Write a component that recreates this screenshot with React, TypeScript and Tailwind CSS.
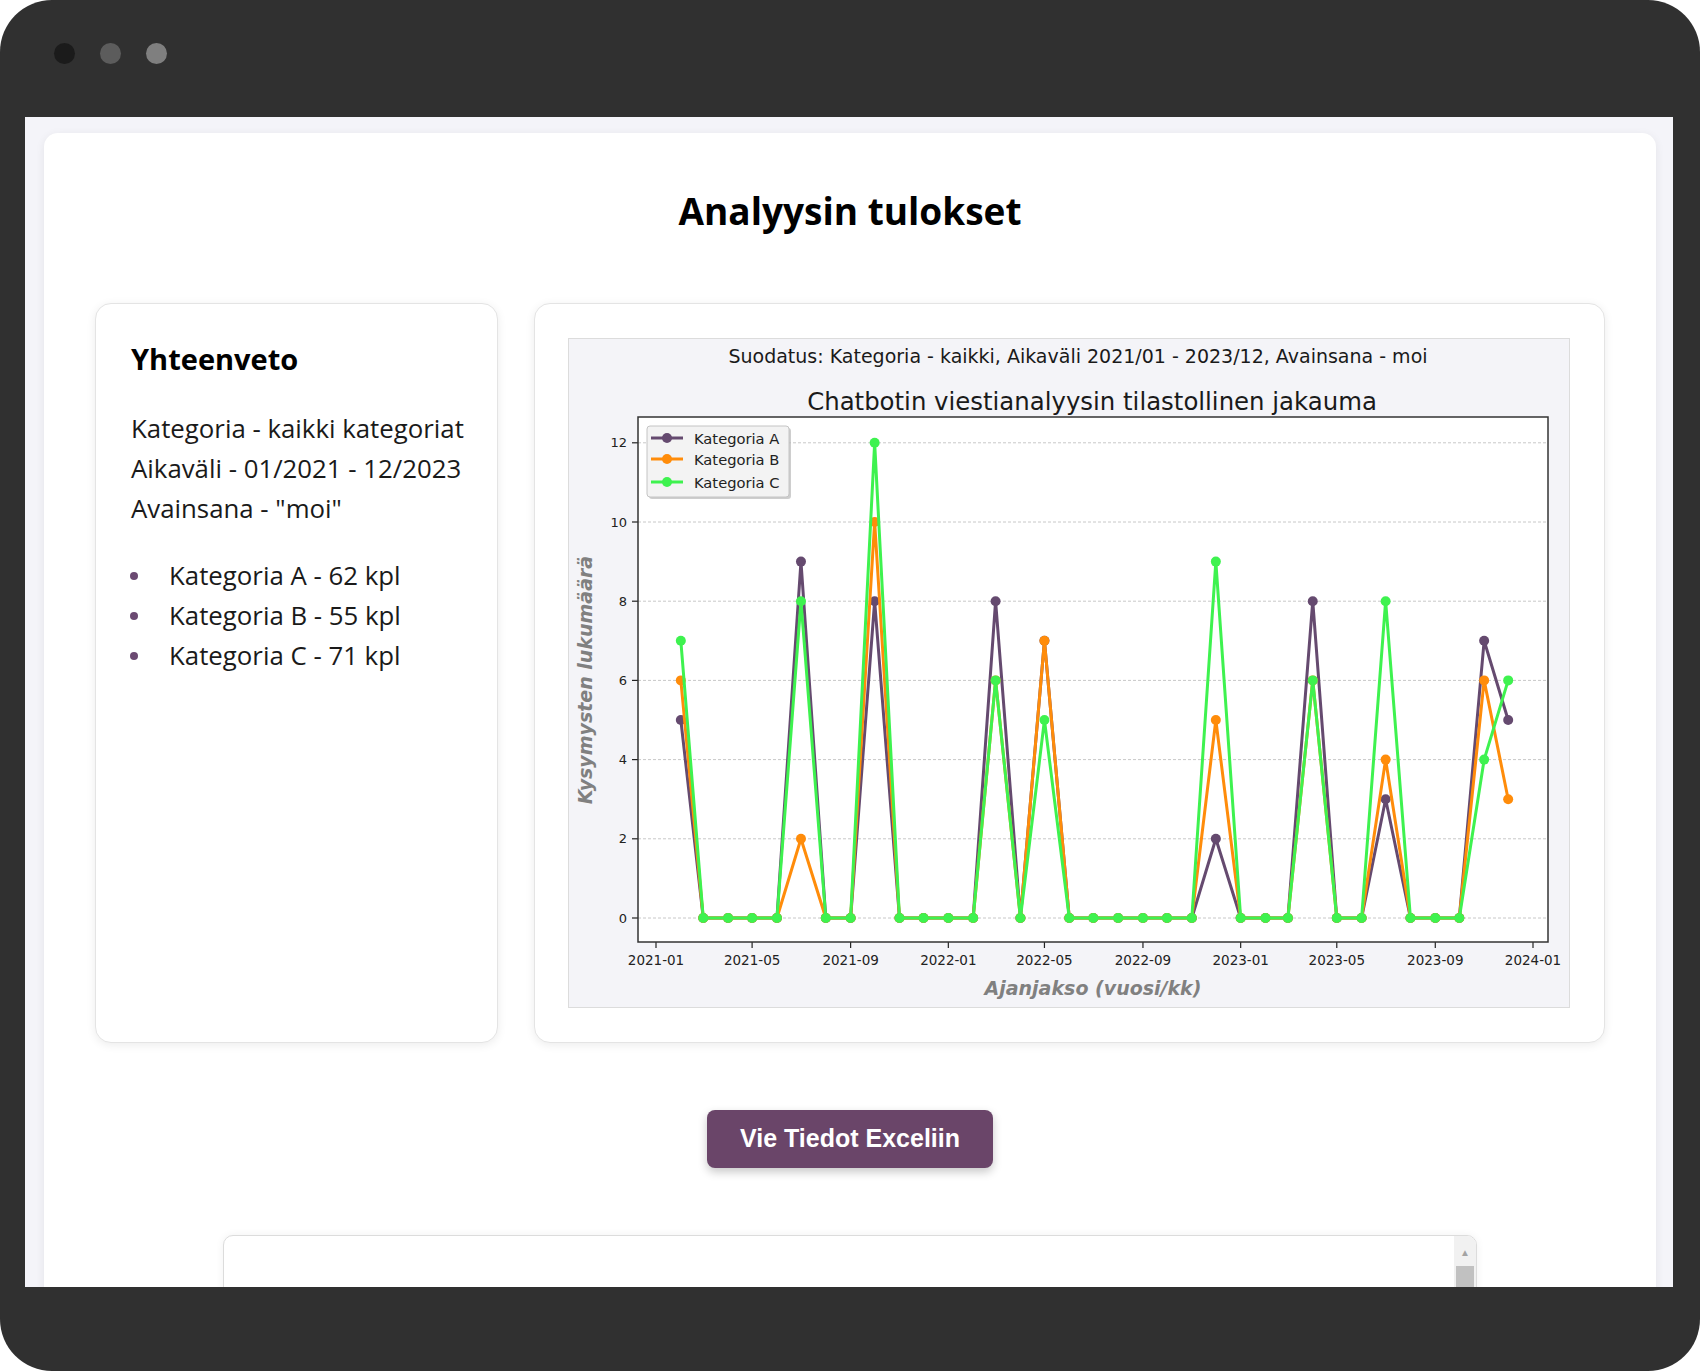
import React from "react";

const A = [5,0,0,0,0,9,0,0,8,0,0,0,0,8,0,7,0,0,0,0,0,0,2,0,0,0,8,0,0,3,0,0,0,7,5];
const B = [6,0,0,0,0,2,0,0,10,0,0,0,0,6,0,7,0,0,0,0,0,0,5,0,0,0,6,0,0,4,0,0,0,6,3];
const C = [7,0,0,0,0,8,0,0,12,0,0,0,0,6,0,5,0,0,0,0,0,0,9,0,0,0,6,0,0,8,0,0,0,4,6];

const DAY0 = Date.UTC(2021, 0, 1);
const PX_PER_DAY = 877 / 1095;
const xOf = (y: number, m: number) =>
  88 + ((Date.UTC(y, m, 1) - DAY0) / 86400000) * PX_PER_DAY;
const yOf = (v: number) => 580 - 39.6 * v;

const pts = (data: number[]) =>
  data.map((v, idx) => {
    const i = idx + 1;
    return [xOf(2021 + Math.floor(i / 12), i % 12), yOf(v)] as [number, number];
  });

const SERIES = [
  { name: "Kategoria A", color: "#654a6f", data: A },
  { name: "Kategoria B", color: "#ff8c0a", data: B },
  { name: "Kategoria C", color: "#3ef24f", data: C },
];

const TICKS: { label: string; x: number }[] = [];
for (let k = 0; k <= 9; k++) {
  const total = k * 4;
  const y = 2021 + Math.floor(total / 12);
  const m = total % 12;
  TICKS.push({ label: `${y}-${String(m + 1).padStart(2, "0")}`, x: xOf(y, m) });
}

function Chart() {
  const font = "'DejaVu Sans', sans-serif";
  return (
    <svg width="1000" height="668" viewBox="1 1 1000 668" style={{ fontFamily: font }}>
      <text x="510" y="25" textAnchor="middle" fontSize="19" fill="#1a1a1a">
        Suodatus: Kategoria - kaikki, Aikaväli 2021/01 - 2023/12, Avainsana - moi
      </text>
      <text x="524" y="72" textAnchor="middle" fontSize="24.4" fill="#1a1a1a">
        Chatbotin viestianalyysin tilastollinen jakauma
      </text>
      <rect x="70" y="79" width="910" height="525" fill="#ffffff" />
      {[0, 2, 4, 6, 8, 10, 12].map((v) => (
        <g key={v}>
          <line x1="70" x2="980" y1={yOf(v)} y2={yOf(v)} stroke="#c8c8c8" strokeWidth="1" strokeDasharray="3 2" />
          <line x1="64" x2="70" y1={yOf(v)} y2={yOf(v)} stroke="#222" strokeWidth="1.2" />
          <text x="59" y={yOf(v)} textAnchor="end" dominantBaseline="central" fontSize="13" fill="#222">
            {v}
          </text>
        </g>
      ))}
      {TICKS.map((t) => (
        <g key={t.label}>
          <line x1={t.x} x2={t.x} y1="604" y2="610" stroke="#222" strokeWidth="1.2" />
          <text x={t.x} y="622" textAnchor="middle" dominantBaseline="central" fontSize="13.5" fill="#222">
            {t.label}
          </text>
        </g>
      ))}
      {SERIES.map((s) => {
        const p = pts(s.data);
        return (
          <g key={s.name}>
            <polyline
              points={p.map(([x, y]) => `${x},${y}`).join(" ")}
              fill="none"
              stroke={s.color}
              strokeWidth="3"
              strokeLinejoin="round"
            />
            {p.map(([x, y], i) => (
              <circle key={i} cx={x} cy={y} r="5" fill={s.color} />
            ))}
          </g>
        );
      })}
      <rect x="70" y="79" width="910" height="525" fill="none" stroke="#333" strokeWidth="1.5" />
      <rect x="81" y="90" width="142" height="71" rx="3" fill="#b9b9b9" opacity="0.7" />
      <rect x="79" y="88" width="142" height="71" rx="3" fill="#f3f3f3" stroke="#c4c4c4" strokeWidth="1" />
      {SERIES.map((s, i) => {
        const cy = [100, 121, 144][i];
        return (
          <g key={s.name}>
            <line x1="83" x2="115" y1={cy} y2={cy} stroke={s.color} strokeWidth="3" />
            <circle cx="99" cy={cy} r="5" fill={s.color} />
            <text x="126" y={cy} dominantBaseline="central" fontSize="14.7" fill="#222">
              {s.name}
            </text>
          </g>
        );
      })}
      <text
        x="17"
        y="342"
        transform="rotate(-90 17 342)"
        textAnchor="middle"
        dominantBaseline="central"
        fontSize="19"
        fontWeight="bold"
        fontStyle="italic"
        fill="#808080"
      >
        Kysymysten lukumäärä
      </text>
      <text
        x="525"
        y="650"
        textAnchor="middle"
        dominantBaseline="central"
        fontSize="19"
        fontWeight="bold"
        fontStyle="italic"
        fill="#808080"
      >
        Ajanjakso (vuosi/kk)
      </text>
    </svg>
  );
}

export default function App() {
  return (
    <div className="w-[1700px] h-[1371px] bg-white">
      <div className="w-full h-full bg-[#303030] rounded-[52px] flex flex-col overflow-hidden">
        <div className="h-[117px] shrink-0 flex items-start pt-[43px] pl-[54px] gap-[25px]">
          <span className="w-[21px] h-[21px] rounded-full bg-[#1b1b1b]" />
          <span className="w-[21px] h-[21px] rounded-full bg-[#5c5c5c]" />
          <span className="w-[21px] h-[21px] rounded-full bg-[#7f7f7f]" />
        </div>
        <div className="flex-1 ml-[25px] mr-[27px] mb-[84px] bg-[#f4f4f9] overflow-hidden pt-[16px] pl-[19px] pr-[17px]">
          <div
            className="bg-white rounded-[14px] shadow-[0_2px_10px_rgba(0,0,0,0.07)] h-[1450px] flex flex-col items-center pt-[56px]"
            style={{ fontFamily: "'Open Sans', 'Noto Sans', sans-serif" }}
          >
            <h1 className="shrink-0 text-[37px] leading-[44px] font-bold text-black">Analyysin tulokset</h1>
            <div className="shrink-0 mt-[70px] self-stretch px-[51px] flex gap-[36px]">
              <div className="w-[403px] h-[740px] shrink-0 rounded-[16px] border border-[#e4e4e4] bg-white shadow-[0_2px_10px_rgba(0,0,0,0.08)] pl-[35px] pt-[37px]">
                <h2 className="text-[29px] leading-[36px] font-bold text-black">Yhteenveto</h2>
                <div className="mt-[31px] text-[25.8px] leading-[40px] text-[#1a1a1a]">
                  <p>Kategoria - kaikki kategoriat</p>
                  <p>Aikaväli - 01/2021 - 12/2023</p>
                  <p>Avainsana - "moi"</p>
                </div>
                <ul className="mt-[27px] text-[25.8px] leading-[40px] text-[#1a1a1a]">
                  {["Kategoria A - 62 kpl", "Kategoria B - 55 kpl", "Kategoria C - 71 kpl"].map((t) => (
                    <li key={t} className="flex items-center">
                      <span className="w-[8px] h-[8px] rounded-full bg-[#6b4a72] ml-[-1px] mr-[31px] mt-[2px]" />
                      <span>{t}</span>
                    </li>
                  ))}
                </ul>
              </div>
              <div className="flex-1 h-[740px] rounded-[16px] border border-[#e4e4e4] bg-white shadow-[0_2px_10px_rgba(0,0,0,0.08)] pl-[33px] pt-[34px]">
                <div className="w-[1002px] h-[670px] border border-[#dcdcdc] bg-[#f4f4f8]">
                  <Chart />
                </div>
              </div>
            </div>
            <button
              className="shrink-0 mt-[67px] w-[286px] h-[58px] rounded-[8px] bg-[#6a4569] text-white text-[25px] font-bold shadow-[0_4px_10px_rgba(0,0,0,0.22)]"
              style={{ fontFamily: "'Liberation Sans', Arial, sans-serif" }}
            >
              Vie Tiedot Exceliin
            </button>
            <div className="mt-[67px] w-[1254px] h-[300px] shrink-0 rounded-t-[10px] border border-[#dcdcdc] bg-white shadow-[0_0_8px_rgba(0,0,0,0.06)] flex justify-end">
              <div className="w-[22px] h-full bg-[#f1f1f1] flex flex-col items-center rounded-tr-[9px]">
                <span className="mt-[10px] text-[10px] leading-[12px] text-[#a3a3a3]">▲</span>
                <div className="mt-[8px] w-[18px] flex-1 bg-[#c1c1c1]" />
              </div>
            </div>
          </div>
        </div>
      </div>
    </div>
  );
}
